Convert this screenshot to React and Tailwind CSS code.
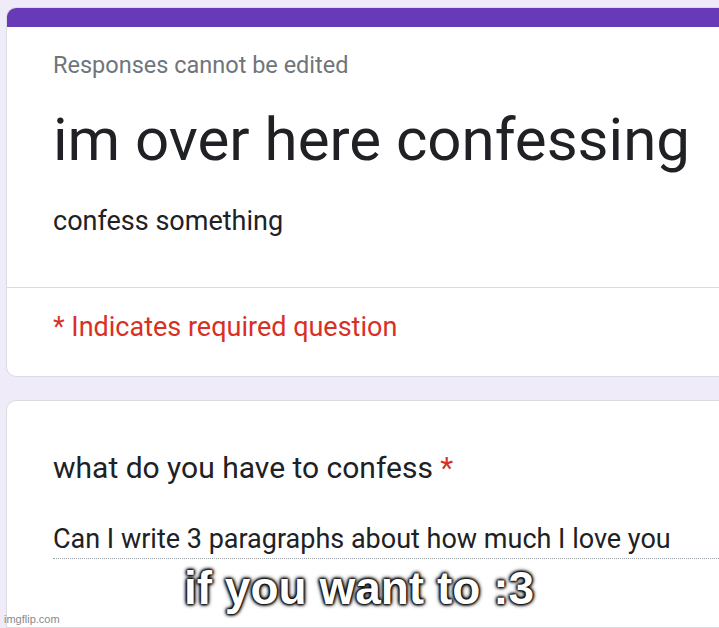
export default function App() {
  return (
    <div className="w-[719px] h-[628px] bg-[#f0ebf8] overflow-hidden relative font-['Roboto',sans-serif]">
      <div className="pl-[6px] pt-[7px] flex flex-col gap-[23px]">
        <div className="bg-white rounded-l-[10px] border border-r-0 border-[#dadce0] overflow-hidden">
          <div className="h-[19px] bg-[#673ab7]" />
          <div className="pl-[46px] pt-[24px] pb-[50px]">
            <div className="text-[23.5px] leading-[28px] text-[#70757a]">Responses cannot be edited</div>
            <div className="text-[60px] leading-[70px] text-[#202124] mt-[26px] whitespace-nowrap">im over here confessing</div>
            <div className="text-[27px] leading-[32px] text-[#202124] mt-[30px]">confess something</div>
          </div>
          <div className="border-t border-[#dadce0] pl-[46px] pt-[22px] pb-[32px]">
            <div className="text-[27px] leading-[34px] text-[#d93025]">* Indicates required question</div>
          </div>
        </div>
        <div className="bg-white rounded-tl-[10px] border border-r-0 border-[#dadce0] h-[228px] pl-[46px] pt-[49px]">
          <div className="text-[30px] leading-[36px] text-[#202124] whitespace-nowrap">
            what do you have to confess <span className="text-[#d93025]">*</span>
          </div>
          <div className="mt-[37px] text-[27px] leading-[32px] text-[#202124] pb-[3px] border-b border-dotted border-[#9aa0a6] whitespace-nowrap">
            Can I write 3 paragraphs about how much I love you
          </div>
        </div>
      </div>
      <div className="absolute left-0 right-0 top-[562px] pr-[1px] text-center text-white text-[46px] leading-[52px] font-bold font-['Liberation_Sans',sans-serif] [text-shadow:0_0_3px_#000,0_0_3px_#000,0_0_4px_#000,0_0_5px_#000,0_0_2px_#000]">
        if you want to :3
      </div>
      <div className="absolute left-[4px] top-[612px] text-[11px] leading-[14px] text-[#8a8a8a] font-['Liberation_Sans',sans-serif]">
        imgflip.com
      </div>
    </div>
  );
}
